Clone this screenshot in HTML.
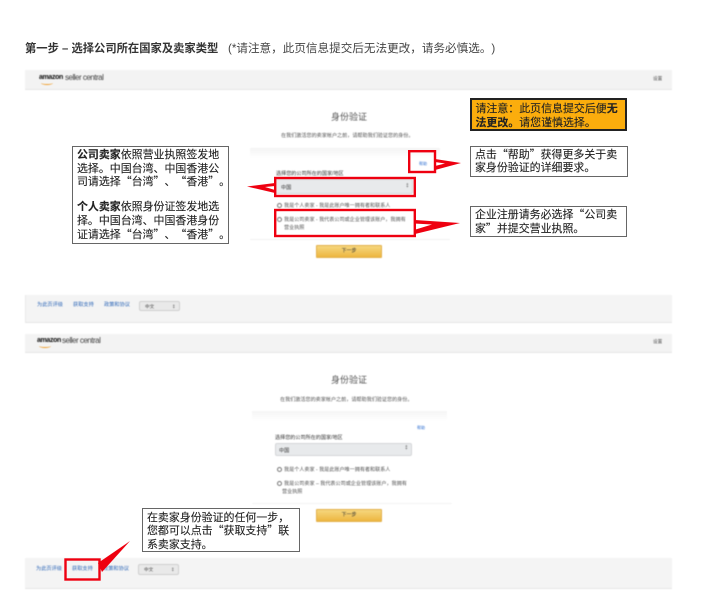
<!DOCTYPE html>
<html lang="zh">
<head>
<meta charset="utf-8">
<style>
html,body{margin:0;padding:0;background:#fff}
body{position:relative;width:706px;height:597px;overflow:hidden;font-family:"Liberation Sans","Noto Sans CJK SC",sans-serif;color:#333;text-spacing-trim:space-all;font-kerning:none}
.a{position:absolute;white-space:nowrap}
.shot{position:absolute;left:0;top:0;width:706px;height:597px;filter:blur(.45px)}
.bar{position:absolute;left:25px;width:647px;background:#f3f3f3;border-bottom:1px solid #e6e6e6;box-sizing:border-box}
.amz{font-size:7px;font-weight:bold;color:#111;letter-spacing:-.35px}
.sc{font-size:8px;color:#444;letter-spacing:-.5px}
.sw{position:absolute;width:12px;height:3px;border-bottom:1.4px solid #f0a030;border-radius:0 0 50% 50%}
.t{font-size:9px;color:#555}
.s{font-size:5.1px;color:#555}
.h{font-size:4px;color:#2a6cd0}
.sel{position:absolute;background:#e8eaec;border:1px solid #d4d6d8;border-radius:2px;box-sizing:border-box}
.btn{position:absolute;background:linear-gradient(#f6d77f,#edb640);border:1px solid #e3b04a;border-radius:1px;box-sizing:border-box;font-size:5px;color:#333;text-align:center}
.r{position:absolute;width:3.4px;height:3.4px;border:.7px solid #777;border-radius:50%;background:#fff}
.lk{font-size:5.2px;color:#2f68b8}
.fsel{position:absolute;background:#e9e9e9;border:1px solid #cfcfcf;border-radius:2px;box-sizing:border-box;font-size:4.6px;color:#444;padding:2px 0 0 5px}
.call{position:absolute;box-sizing:border-box;background:#fff;border:1.5px solid #666;font-family:"Noto Sans CJK SC",sans-serif;font-size:10.95px;line-height:13.7px;color:#222;padding:1px 0 0 4px;white-space:nowrap;filter:blur(.35px);-webkit-text-stroke:.12px #222}
</style>
</head>
<body>
<div class="a" style="left:25px;top:42px;font-size:11.3px;font-weight:bold;color:#333;line-height:14px;filter:blur(.3px)">第一步 – 选择公司所在国家及卖家类型</div>
<div class="a" style="left:228px;top:42px;font-size:11.6px;color:#444;line-height:14px;filter:blur(.3px)">(*请注意，此页信息提交后无法更改，请务必慎选。)</div>

<div class="shot">
  <div class="bar" style="top:70px;height:20px"></div>
  <div class="a amz" style="left:39px;top:74px">amazon</div>
  <div class="sw" style="left:41px;top:81px"></div>
  <div class="a sc" style="left:65px;top:73px">seller central</div>
  <div class="a" style="left:653px;top:76px;font-size:4.6px;color:#555">设置</div>

  <div class="a t" style="left:331px;top:110px">身份验证</div>
  <div class="a s" style="left:281px;top:132px">在我们激活您的卖家帐户之前，请帮助我们验证您的身份。</div>
  <div class="a" style="left:250px;top:148px;width:190px;height:10px;background:linear-gradient(#f4f4f4,#fff)"></div>
  <div class="a h" style="left:419px;top:161px">帮助</div>
  <div class="a" style="left:276px;top:170px;font-size:5.1px;color:#333">选择您的公司所在的国家/地区</div>
  <div class="sel" style="left:275px;top:179px;width:138px;height:15px"></div>
  <div class="a s" style="left:281px;top:184px;color:#333">中国</div>
  <div class="a" style="left:406px;top:183px;font-size:5px;color:#555">‡</div>
  <div class="r" style="left:277px;top:203px"></div>
  <div class="a s" style="left:284px;top:202px">我是个人卖家 - 我是此账户唯一拥有者和联系人</div>
  <div class="r" style="left:277px;top:217px"></div>
  <div class="a s" style="left:284px;top:216px">我是公司卖家 - 我代表公司或企业管理该账户，我拥有</div>
  <div class="a s" style="left:284px;top:224px">营业执照</div>
  <div class="a" style="left:250px;top:239px;width:200px;height:1px;background:#f2f2f2"></div>
  <div class="btn" style="left:316px;top:245px;width:66px;height:13px;line-height:11px">下一步</div>

  <div class="bar" style="top:295px;height:28px;background:#f4f4f4;border-left:1px solid #e8e8e8"></div>
  <div class="a lk" style="left:37px;top:301px">为此页评级</div>
  <div class="a lk" style="left:73px;top:301px">获取支持</div>
  <div class="a lk" style="left:104px;top:301px">政策和协议</div>
  <div class="fsel" style="left:139px;top:301px;width:41px;height:10px">中文<span style="position:absolute;right:4px;top:2px">‡</span></div>

  <div class="bar" style="top:334px;height:19px"></div>
  <div class="a amz" style="left:37px;top:337px">amazon</div>
  <div class="sw" style="left:39px;top:344px"></div>
  <div class="a sc" style="left:62px;top:336px">seller central</div>
  <div class="a" style="left:653px;top:339px;font-size:4.6px;color:#555">设置</div>

  <div class="a t" style="left:331px;top:373px">身份验证</div>
  <div class="a s" style="left:280px;top:396px">在我们激活您的卖家帐户之前，请帮助我们验证您的身份。</div>
  <div class="a" style="left:252px;top:411px;width:195px;height:10px;background:linear-gradient(#f5f5f5,#fff)"></div>
  <div class="a h" style="left:417px;top:425px">帮助</div>
  <div class="a" style="left:275px;top:434px;font-size:5.1px;color:#333">选择您的公司所在的国家/地区</div>
  <div class="sel" style="left:275px;top:443px;width:137px;height:13px"></div>
  <div class="a s" style="left:279px;top:447px;color:#333">中国</div>
  <div class="a" style="left:405px;top:445px;font-size:5px;color:#555">‡</div>
  <div class="r" style="left:277px;top:467px"></div>
  <div class="a s" style="left:284px;top:466px">我是个人卖家 - 我是此账户唯一拥有者和联系人</div>
  <div class="r" style="left:277px;top:481px"></div>
  <div class="a s" style="left:284px;top:480px">我是公司卖家 – 我代表公司或企业管理该账户，我拥有</div>
  <div class="a s" style="left:282px;top:488px">营业执照</div>
  <div class="a" style="left:252px;top:503px;width:200px;height:1px;background:#f4f4f4"></div>
  <div class="btn" style="left:316px;top:509px;width:66px;height:13px;line-height:11px">下一步</div>

  <div class="bar" style="top:558px;height:31px;background:#f4f4f4"></div>
  <div class="a lk" style="left:36px;top:565px">为此页评级</div>
  <div class="a lk" style="left:72px;top:565px">获取支持</div>
  <div class="a lk" style="left:103px;top:565px">政策和协议</div>
  <div class="fsel" style="left:138px;top:564px;width:41px;height:11px">中文<span style="position:absolute;right:4px;top:2px">‡</span></div>
</div>

<svg class="a" style="left:0;top:0;filter:blur(.3px)" width="706" height="597" viewBox="0 0 706 597" fill="none">
  <g fill="#ee0010" stroke="none">
    <path d="M435 159 L461 163 L435 170Z"/>
    <path d="M275 183 L247 186.500 L275 193Z"/>
    <path d="M415 220 L460 223 L415 234Z"/>
    <path d="M98 563 L130 541 L102 572Z"/>
  </g>
  <g fill="#fff" stroke="none">
    <path d="M435 162 L445 163.500 L435 166Z"/>
    <path d="M275 186 L265 187 L275 190Z"/>
    <path d="M414 223.500 L432 224.500 L414 230Z"/>
  </g>
  <g stroke="#ee0010" stroke-width="2.400">
    <rect x="409.200" y="151.200" width="25.800" height="20.800"/>
    <rect x="275.200" y="178" width="139.600" height="18"/>
    <rect x="275.200" y="210" width="139.600" height="26"/>
    <rect x="65.500" y="559.500" width="34" height="20"/>
  </g>
</svg>

<div class="call" style="left:72px;top:146px;width:157px;height:98px">
  <div><b>公司卖家</b>依照营业执照签发地</div>
  <div>选择。中国台湾、中国香港公</div>
  <div>司请选择“台湾”、“香港”。</div>
  <div style="height:11.3px"></div>
  <div><b>个人卖家</b>依照身份证签发地选</div>
  <div>择。中国台湾、中国香港身份</div>
  <div>证请选择“台湾”、“香港”。</div>
</div>
<div class="call" style="left:470px;top:98px;width:157px;height:33px;background:#fbad0d;border:2px solid #222;padding:2px 0 0 3.5px;line-height:13.5px">
  <div>请注意：此页信息提交后便<b>无</b></div>
  <div><b>法更改。</b>请您谨慎选择。</div>
</div>
<div class="call" style="left:470px;top:146px;width:158px;height:31px;padding-top:0.5px">
  <div>点击“帮助”获得更多关于卖</div>
  <div>家身份验证的详细要求。</div>
</div>
<div class="call" style="left:470px;top:206px;width:157px;height:31px;padding-top:1px">
  <div>企业注册请务必选择“公司卖</div>
  <div>家”并提交营业执照。</div>
</div>
<div class="call" style="left:142px;top:508px;width:158px;height:44px;padding-top:2px;line-height:13.3px">
  <div>在卖家身份验证的任何一步，</div>
  <div>您都可以点击“获取支持”联</div>
  <div>系卖家支持。</div>
</div>
</body>
</html>
